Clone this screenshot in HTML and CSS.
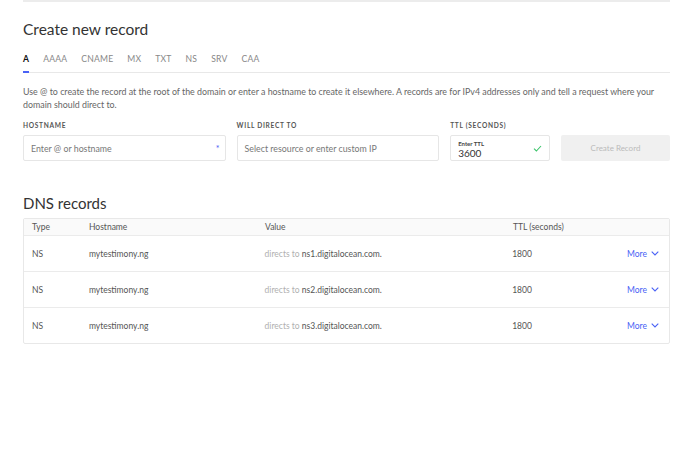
FILE: index.html
```html
<!DOCTYPE html>
<html>
<head>
<meta charset="utf-8">
<link rel="stylesheet" href="styles.css">
</head>
<body>
<div class="page">
  <div class="topbar"></div>
  <h1 class="title">Create new record</h1>
  <div class="tabs">
    <span class="tab active">A</span>
    <span class="tab">AAAA</span>
    <span class="tab">CNAME</span>
    <span class="tab">MX</span>
    <span class="tab">TXT</span>
    <span class="tab">NS</span>
    <span class="tab">SRV</span>
    <span class="tab">CAA</span>
  </div>
  <p class="desc">Use @ to create the record at the root of the domain or enter a hostname to create it elsewhere. A records are for IPv4 addresses only and tell a request where your domain should direct to.</p>
  <div class="form">
    <div class="field host">
      <label class="label">HOSTNAME</label>
      <div class="input"><span class="ph">Enter @ or hostname</span><span class="req">*</span></div>
    </div>
    <div class="field direct">
      <label class="label">WILL DIRECT TO</label>
      <div class="input"><span class="ph">Select resource or enter custom IP</span></div>
    </div>
    <div class="field ttl">
      <label class="label">TTL (SECONDS)</label>
      <div class="input ttlinput">
        <div class="ttlval"><span class="small">Enter TTL</span><span class="num">3600</span></div>
        <svg class="check" width="9" height="7" viewBox="0 0 9 7"><path d="M1 3.6 L3.4 6 L8 1" fill="none" stroke="#3bc46a" stroke-width="1.1"/></svg>
      </div>
    </div>
    <div class="field btnfield">
      <button class="btn">Create Record</button>
    </div>
  </div>
  <h2 class="subtitle">DNS records</h2>
  <div class="table">
    <div class="row head">
      <span class="c type">Type</span>
      <span class="c hostname">Hostname</span>
      <span class="c value">Value</span>
      <span class="c ttlc">TTL (seconds)</span>
      <span class="c more"></span>
    </div>
    <div class="row">
      <span class="c type">NS</span>
      <span class="c hostname">mytestimony.ng</span>
      <span class="c value"><span class="muted">directs to</span> ns1.digitalocean.com.</span>
      <span class="c ttlc">1800</span>
      <span class="c more">More <svg width="8" height="5" viewBox="0 0 8 5"><path d="M0.7 0.7 L4 4 L7.3 0.7" fill="none" stroke="#4a62f5" stroke-width="1.1"/></svg></span>
    </div>
    <div class="row">
      <span class="c type">NS</span>
      <span class="c hostname">mytestimony.ng</span>
      <span class="c value"><span class="muted">directs to</span> ns2.digitalocean.com.</span>
      <span class="c ttlc">1800</span>
      <span class="c more">More <svg width="8" height="5" viewBox="0 0 8 5"><path d="M0.7 0.7 L4 4 L7.3 0.7" fill="none" stroke="#4a62f5" stroke-width="1.1"/></svg></span>
    </div>
    <div class="row">
      <span class="c type">NS</span>
      <span class="c hostname">mytestimony.ng</span>
      <span class="c value"><span class="muted">directs to</span> ns3.digitalocean.com.</span>
      <span class="c ttlc">1800</span>
      <span class="c more">More <svg width="8" height="5" viewBox="0 0 8 5"><path d="M0.7 0.7 L4 4 L7.3 0.7" fill="none" stroke="#4a62f5" stroke-width="1.1"/></svg></span>
    </div>
  </div>
</div>
</body>
</html>
```
FILE: styles.css
```css
* { box-sizing: border-box; }
html, body { margin: 0; padding: 0; background: #fff; }
body { font-family: Lato, "Open Sans", sans-serif; color: #333; }
.page { width: 647px; margin-left: 23px; }
.topbar { height: 2px; background: #ececec; }
.title { font-weight: 400; font-size: 15.5px; margin: 16px 0 0; line-height: 22px; color: #333; }
.tabs { display: flex; margin-top: 12px; border-bottom: 1px solid #e8e8e8; height: 21px; }
.tab { font-size: 8.6px; color: #888; letter-spacing: 0.2px; margin-right: 14px; line-height: 15px; }
.tab.active { color: #111; font-weight: 700; border-bottom: 2px solid #4a62f5; height: 21px; }
.desc { font-size: 8.85px; color: #666; line-height: 13px; margin: 12px 0 0; }
.form { display: flex; gap: 11px; margin-top: 10px; }
.field { display: flex; flex-direction: column; }
.label { font-size: 6.6px; font-weight: 700; letter-spacing: 0.7px; color: #555; line-height: 8px; margin-bottom: 6px; }
.input { height: 26px; border: 1px solid #e6e6e6; border-radius: 2px; display: flex; align-items: center; justify-content: space-between; padding: 0 5px 0 7px; }
.ph { font-size: 8.8px; color: #777; }
.req { color: #4a62f5; font-size: 9px; }
.host { width: 203px; }
.direct { width: 203px; }
.ttl { width: 100px; }
.ttlval { display: flex; flex-direction: column; padding-top: 2px; }
.small { font-size: 6px; font-weight: 700; color: #444; line-height: 8px; }
.num { font-size: 10px; color: #333; line-height: 11px; }
.check { margin-right: 2px; }
.btnfield { justify-content: flex-end; width: 109px; }
.btn { height: 26px; width: 109px; border: none; background: #f0f0f0; color: #bbb; font-family: inherit; font-size: 8px; border-radius: 2px; }
.subtitle { font-weight: 400; font-size: 15px; line-height: 20px; margin: 32px 0 0; color: #333; }
.table { border: 1px solid #e8e8e8; border-radius: 2px; margin-top: 5px; }
.row { display: flex; align-items: center; height: 36px; border-top: 1px solid #ebebeb; font-size: 8.5px; color: #555; }
.row.head { height: 16px; border-top: none; background: #fafafa; color: #555; }
.c { display: block; }
.type { width: 65px; padding-left: 8px; }
.hostname { width: 176px; }
.value { width: 248px; color: #555; }
.muted { color: #b0b0b0; }
.ttlc { width: 115px; }
.more { flex: 1; text-align: right; padding-right: 10px; color: #4a62f5; display: flex; justify-content: flex-end; align-items: center; gap: 4px; }
```
